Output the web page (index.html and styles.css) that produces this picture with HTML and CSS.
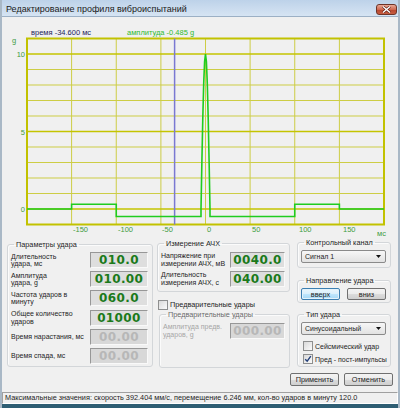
FILE: index.html
```html
<!DOCTYPE html>
<html lang="ru">
<head>
    <meta charset="UTF-8">
    <link rel="stylesheet" href="styles.css">
    <title>Редактирование профиля виброиспытаний</title>
</head>
<body>
<div class="window">
    <div class="titlebar">
        <span class="title">Редактирование профиля виброиспытаний</span>
        <span class="close">
            <svg width="9" height="7" viewBox="0 0 9 7"><path d="M1 0.5 L8 6.5 M8 0.5 L1 6.5" stroke="#5a1a10" stroke-width="2.6"/><path d="M1 0.5 L8 6.5 M8 0.5 L1 6.5" stroke="#fff" stroke-width="1.4"/></svg>
        </span>
    </div>

    <!-- chart: viewBox is in page coordinates -->
    <svg class="chart" viewBox="2 17 396 221">
        <g class="grid">
            <line x1="71.6" y1="38.5" x2="71.6" y2="224.5"/>
            <line x1="116.25" y1="38.5" x2="116.25" y2="224.5"/>
            <line x1="160.9" y1="38.5" x2="160.9" y2="224.5"/>
            <line x1="205.5" y1="38.5" x2="205.5" y2="224.5"/>
            <line x1="250.1" y1="38.5" x2="250.1" y2="224.5"/>
            <line x1="294.75" y1="38.5" x2="294.75" y2="224.5"/>
            <line x1="339.4" y1="38.5" x2="339.4" y2="224.5"/>
            <line x1="27" y1="69.5" x2="384" y2="69.5"/>
            <line x1="27" y1="85" x2="384" y2="85"/>
            <line x1="27" y1="100.5" x2="384" y2="100.5"/>
            <line x1="27" y1="116" x2="384" y2="116"/>
            <line x1="27" y1="147" x2="384" y2="147"/>
            <line x1="27" y1="162.5" x2="384" y2="162.5"/>
            <line x1="27" y1="178" x2="384" y2="178"/>
            <line x1="27" y1="193.5" x2="384" y2="193.5"/>
        </g>
        <g class="grid-major">
            <line x1="27" y1="54" x2="384" y2="54"/>
            <line x1="27" y1="131.5" x2="384" y2="131.5"/>
            <line x1="27" y1="209" x2="384" y2="209"/>
        </g>
        <rect class="frame" x="27" y="38.5" width="357" height="186"/>
        <line class="cursor" x1="174.6" y1="38.5" x2="174.6" y2="224.5"/>
        <path class="signal" d="M27 209 H71.6 V204.3 H116.25 V216.5 H201 V209 L201.9 161.1 L202.8 117.9 L203.7 83.6 L204.6 61.6 L205.5 54 L206.4 61.6 L207.3 83.6 L208.2 117.9 L209.1 161.1 L210 209 V216.5 H294.75 V204.3 H339.4 V209 H384"/>

        <text class="t-time" x="31" y="35">время -34.600 мс</text>
        <text class="t-amp" x="127" y="35">амплитуда -0.485 g</text>
        <text class="axis" x="12" y="43">g</text>
        <text class="axis" x="25" y="57" text-anchor="end">10</text>
        <text class="axis" x="25" y="135" text-anchor="end">5</text>
        <text class="axis" x="25" y="212" text-anchor="end">0</text>
        <text class="axis" x="73" y="232">-150</text>
        <text class="axis" x="118" y="232">-100</text>
        <text class="axis" x="162" y="232">-50</text>
        <text class="axis" x="207" y="232">0</text>
        <text class="axis" x="252" y="232">50</text>
        <text class="axis" x="299" y="232">100</text>
        <text class="axis" x="343" y="232">150</text>
        <text class="axis" x="377" y="236">мс</text>
    </svg>

    <div class="panels">
        <div class="col col-params">
            <fieldset class="group">
                <legend>Параметры удара</legend>
                <div class="row"><span class="label">Длительность<br>удара, мс</span><span class="num">010.0</span></div>
                <div class="row"><span class="label">Амплитуда<br>удара, g</span><span class="num">010.00</span></div>
                <div class="row"><span class="label">Частота ударов в<br>минуту</span><span class="num">060.0</span></div>
                <div class="row"><span class="label">Общее количество<br>ударов</span><span class="num">01000</span></div>
                <div class="row"><span class="label">Время нарастания, мс</span><span class="num off">00.00</span></div>
                <div class="row"><span class="label">Время спада, мс</span><span class="num off">00.00</span></div>
            </fieldset>
        </div>

        <div class="col col-afc">
            <fieldset class="group afc">
                <legend>Измерение АЧХ</legend>
                <div class="row"><span class="label">Напряжение при<br>измерении АЧХ, мВ</span><span class="num narrow">0040.0</span></div>
                <div class="row"><span class="label">Длительность<br>измерения АЧХ, с</span><span class="num narrow">040.00</span></div>
            </fieldset>
            <div class="check-row pre-check"><span class="box"></span><span>Предварительные удары</span></div>
            <fieldset class="group pre disabled">
                <legend>Предварительные удары</legend>
                <div class="row"><span class="label">Амплитуда предв.<br>ударов, g</span><span class="num narrow off">000.00</span></div>
            </fieldset>
        </div>

        <div class="col col-side">
            <fieldset class="group channel">
                <legend>Контрольный канал</legend>
                <div class="select"><span>Сигнал 1</span><svg width="5" height="3" viewBox="0 0 5 3"><path d="M0 0 H5 L2.5 3 Z" fill="#111"/></svg></div>
            </fieldset>
            <fieldset class="group direction">
                <legend>Направление удара</legend>
                <div class="toggle">
                    <button class="btn active">вверх</button>
                    <button class="btn">вниз</button>
                </div>
            </fieldset>
            <fieldset class="group kind">
                <legend>Тип удара</legend>
                <div class="select"><span>Синусоидальный</span><svg width="5" height="3" viewBox="0 0 5 3"><path d="M0 0 H5 L2.5 3 Z" fill="#111"/></svg></div>
                <div class="check-row seismic"><span class="box"></span><span>Сейсмический удар</span></div>
                <div class="check-row pulses"><span class="box checked"><svg width="8" height="8" viewBox="0 0 8 8"><path d="M1.2 4.2 L3.2 6.2 L6.8 1.2" fill="none" stroke="#24407a" stroke-width="1.4"/></svg></span><span>Пред - пост-импульсы</span></div>
            </fieldset>
        </div>
    </div>

    <div class="actions">
        <button class="btn">Применить</button>
        <button class="btn">Отменить</button>
    </div>

    <div class="status">Максимальные значения: скорость 392.404 мм/с, перемещение 6.246 мм, кол-во ударов в минуту 120.0</div>
    <div class="frame-bottom"></div>
</div>
</body>
</html>
```

FILE: styles.css
```css
* {
  box-sizing: border-box;
}

body {
  margin: 0;
  font-family: "Liberation Sans", Arial, sans-serif;
  font-size: 7px;
  color: #1e1e1e;
  background: #f0f0f0;
}

.window {
  width: 400px;
  height: 408px;
  display: flex;
  flex-direction: column;
  background: #f0f0f0;
  border-left: 2px solid #a9b8c6;
  border-right: 2px solid #a9b8c6;
  overflow: hidden;
}

.titlebar {
  height: 17px;
  flex: none;
  display: flex;
  align-items: flex-start;
  justify-content: space-between;
  background: linear-gradient(#bdd2e9, #d6e4f3);
  border-bottom: 1px solid #9cb0c5;
}

.title {
  margin: 4px 0 0 4px;
  font-size: 9px;
  line-height: 10px;
  color: #1b1b1b;
}

.close {
  width: 21px;
  height: 11px;
  margin: 4px 1px 0 0;
  display: flex;
  align-items: center;
  justify-content: center;
  border: 1px solid #6e3428;
  border-radius: 3px;
  background: linear-gradient(#e9a896, #d06a52 50%, #b8462e 51%, #c65c40);
}

.chart {
  display: block;
  width: 396px;
  height: 221px;
  flex: none;
}

.grid line {
  stroke: #cdcd45;
  stroke-width: 1;
}

.grid-major line {
  stroke: #c4c400;
  stroke-width: 1.6;
}

.frame {
  fill: none;
  stroke: #c2c200;
  stroke-width: 2;
}

.cursor {
  stroke: #7a78d2;
  stroke-width: 1.5;
}

.signal {
  fill: none;
  stroke: #1fcc1f;
  stroke-width: 1.6;
}

.chart text {
  font-family: "Liberation Sans", Arial, sans-serif;
  font-size: 7.5px;
}

.t-time {
  fill: #1d1d5a;
}

.t-amp {
  fill: #2fbb2f;
}

.axis {
  fill: #3f9c3f;
}

/* panels */

.panels {
  display: flex;
  height: 132px;
  flex: none;
  padding-left: 5px;
}

.col {
  display: flex;
  flex-direction: column;
}

.col-params {
  width: 146px;
  margin-top: 2px;
}

.col-afc {
  width: 133px;
  margin-left: 4px;
  margin-top: 0.5px;
}

.col-side {
  width: 94px;
  margin-left: 7px;
}

.group {
  margin: 0;
  padding: 3px 4px 2px 3px;
  min-width: 0;
  border: 1px solid #d3d6d9;
  border-radius: 3px;
  box-shadow: inset 1px 1px 0 #fbfbfb;
}

.group legend {
  margin-left: 3px;
  padding: 0 2px;
  font-size: 7.3px;
  line-height: 9px;
}

.row {
  display: flex;
  align-items: center;
  justify-content: space-between;
  height: 16px;
}

.row + .row {
  margin-top: 3.2px;
}

.label {
  line-height: 7.4px;
  white-space: nowrap;
}

.num {
  width: 58px;
  height: 16px;
  flex: none;
  display: flex;
  align-items: center;
  justify-content: center;
  font-family: "DejaVu Sans", sans-serif;
  font-weight: bold;
  font-size: 12px;
  letter-spacing: 0.4px;
  color: #1b7a1b;
  background: #dedede;
  border: 1px solid;
  border-color: #979797 #f9f9f9 #f9f9f9 #979797;
}

.num.narrow {
  width: 55px;
}

.num.off {
  color: #b7b7b7;
  background: #d8d8d8;
}

.afc {
  padding-top: 4px;
  padding-bottom: 4px;
}

.check-row {
  display: flex;
  align-items: center;
  gap: 2px;
  height: 10px;
  white-space: nowrap;
}

.box {
  width: 10px;
  height: 10px;
  flex: none;
  display: flex;
  align-items: center;
  justify-content: center;
  border: 1px solid #8e8f8f;
  background: linear-gradient(135deg, #d9d9d9, #fbfbfb);
}

.pre-check {
  margin-top: 8px;
  margin-left: 1px;
  font-size: 7.3px;
}

.pre {
  margin-left: 2px;
  padding-top: 4px;
  height: 58px;
}

.disabled legend {
  color: #6b6b6b;
}

.disabled .label {
  color: #a6a6a6;
}

.select {
  height: 13px;
  display: flex;
  align-items: center;
  justify-content: space-between;
  padding: 0 4px 0 3px;
  border: 1px solid #8a8a8a;
  border-radius: 2px;
  background: linear-gradient(#f7f7f7, #e2e2e2);
}

.channel {
  padding-top: 3px;
  padding-bottom: 4px;
}

.direction {
  margin-top: 7.5px;
  padding-top: 3.5px;
}

.toggle {
  display: flex;
  justify-content: space-between;
}

.toggle .btn {
  width: 39px;
  height: 12px;
}

.kind {
  margin-top: 6.5px;
  padding-top: 3.5px;
}

.seismic {
  margin-top: 6px;
  margin-left: 2px;
}

.pulses {
  margin-top: 3px;
  margin-left: 2px;
}

.btn {
  width: 49px;
  height: 13px;
  padding: 0;
  font-family: "Liberation Sans", Arial, sans-serif;
  font-size: 7.3px;
  color: #1e1e1e;
  border: 1px solid #707070;
  border-radius: 2px;
  background: linear-gradient(#f3f3f3 0%, #ebebeb 50%, #dcdcdc 51%, #cfcfcf 100%);
}

.btn.active {
  border-color: #3c7fb1;
  background: linear-gradient(#eaf6fd 0%, #d9f0fc 50%, #bee6fd 51%, #a7d9f5 100%);
  box-shadow: inset 0 0 0 1px #e3f2fb;
}

.actions {
  display: flex;
  justify-content: flex-end;
  gap: 5px;
  padding: 3px 5px 0 0;
}

.status {
  margin-top: auto;
  height: 12px;
  padding-left: 2px;
  font-size: 7.3px;
  line-height: 10px;
  white-space: nowrap;
  border: 1px solid;
  border-color: #a0a0a0 #ffffff #ffffff #a0a0a0;
}

.frame-bottom {
  height: 4px;
  flex: none;
  background: #2e5e73;
}
```
